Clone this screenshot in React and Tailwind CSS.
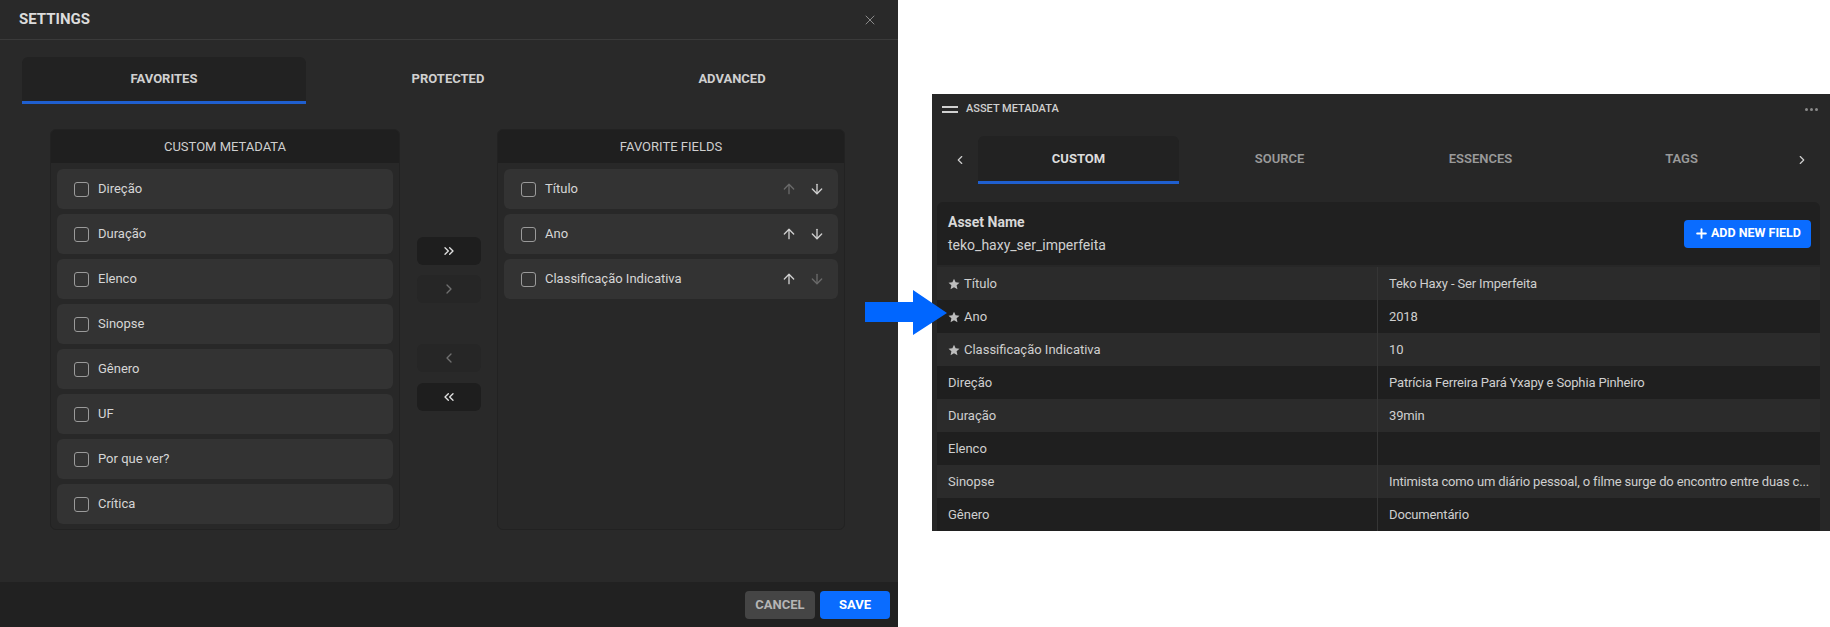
import React from "react";
import { X, ArrowUp, ArrowDown, ChevronsRight, ChevronRight, ChevronLeft, ChevronsLeft, Plus } from "lucide-react";

const font = { fontFamily: "Roboto, 'Noto Sans', sans-serif" };

function Checkbox() {
  return <div className="w-[15px] h-[15px] rounded-[3px] border-[1.5px] border-[#9a9a9a] shrink-0" />;
}

function Item({ label, up, down, arrows }) {
  return (
    <div className="h-[40px] rounded-md bg-[#333333] flex items-center pl-[17px] pr-[13px]">
      <Checkbox />
      <span className="ml-[9px] text-[13px] text-[#d6d6d6] flex-1">{label}</span>
      {arrows && (
        <div className="flex items-center gap-[12px]">
          <ArrowUp size={16} strokeWidth={2} className={up ? "text-[#d0d0d0]" : "text-[#6a6a6a]"} />
          <ArrowDown size={16} strokeWidth={2} className={down ? "text-[#d0d0d0]" : "text-[#6a6a6a]"} />
        </div>
      )}
    </div>
  );
}

function Panel({ title, children, w }) {
  return (
    <div className={`${w} h-[401px] rounded-md border border-[#222222] bg-[#282828] flex flex-col overflow-hidden`}>
      <div className="h-[33px] bg-[#1f1f1f] flex items-center justify-center text-[13px] text-[#cfcfcf]">{title}</div>
      <div className="flex flex-col gap-[5px] px-[6px] pt-[6px]">{children}</div>
    </div>
  );
}

function MidBtn({ children, active, className = "" }) {
  return (
    <div className={`w-[64px] h-[28px] rounded-md flex items-center justify-center ${active ? "bg-[#1e1e1e] text-[#e0e0e0]" : "bg-[#262626] text-[#707070]"} ${className}`}>
      {children}
    </div>
  );
}

function Star() {
  return (
    <svg width="12" height="12" viewBox="0 0 24 24" className="mr-[4px] shrink-0">
      <path fill="#bdbdbd" d="M12 1.5l3.2 7.1 7.8.8-5.8 5.3 1.7 7.7L12 18.4l-6.9 4 1.7-7.7L1 9.4l7.8-.8z" />
    </svg>
  );
}

function Settings() {
  const left = ["Direção", "Duração", "Elenco", "Sinopse", "Gênero", "UF", "Por que ver?", "Crítica"];
  return (
    <div className="w-[898px] h-[627px] bg-[#292929] flex flex-col shrink-0">
      <div className="h-[40px] border-b border-[#3a3a3a] flex items-center justify-between pl-[19px] pr-[20px]">
        <span className="text-[15px] font-bold text-[#dcdcdc]">SETTINGS</span>
        <X size={16} strokeWidth={1.5} className="text-[#8a8a8a]" />
      </div>
      <div className="flex-1 flex flex-col">
        <div className="pl-[22px] pr-[24px] pt-[17px]">
          <div className="grid grid-cols-3 h-[47px]">
            <div className="bg-[#222222] rounded-t-md border-b-[3px] border-[#1f5fcf] flex items-center justify-center text-[13px] font-bold text-[#d0d0d0]">FAVORITES</div>
            <div className="flex items-center justify-center text-[13px] font-bold text-[#d0d0d0] pb-[3px]">PROTECTED</div>
            <div className="flex items-center justify-center text-[13px] font-bold text-[#d0d0d0] pb-[3px]">ADVANCED</div>
          </div>
        </div>
        <div className="flex pl-[50px] mt-[25px]">
          <Panel title="CUSTOM METADATA" w="w-[350px]">
            {left.map((l) => <Item key={l} label={l} />)}
          </Panel>
          <div className="w-[97px] flex flex-col items-center pt-[108px]">
            <MidBtn active><ChevronsRight size={16} strokeWidth={2} /></MidBtn>
            <MidBtn className="mt-[10px]"><ChevronRight size={16} strokeWidth={2} /></MidBtn>
            <MidBtn className="mt-[41px]"><ChevronLeft size={16} strokeWidth={2} /></MidBtn>
            <MidBtn active className="mt-[11px]"><ChevronsLeft size={16} strokeWidth={2} /></MidBtn>
          </div>
          <Panel title="FAVORITE FIELDS" w="w-[348px]">
            <Item label="Título" arrows up={false} down />
            <Item label="Ano" arrows up down />
            <Item label="Classificação Indicativa" arrows up down={false} />
          </Panel>
        </div>
      </div>
      <div className="h-[45px] bg-[#212121] flex items-center justify-end pr-[8px] gap-[5px]">
        <div className="w-[70px] h-[28px] rounded-[4px] bg-[#454545] text-[#b5b5b5] text-[13px] font-bold flex items-center justify-center">CANCEL</div>
        <div className="w-[70px] h-[28px] rounded-[4px] bg-[#0a6cff] text-white text-[13px] font-bold flex items-center justify-center">SAVE</div>
      </div>
    </div>
  );
}

function AssetMetadata() {
  const rows = [
    ["Título", "Teko Haxy - Ser Imperfeita", true],
    ["Ano", "2018", true],
    ["Classificação Indicativa", "10", true],
    ["Direção", "Patrícia Ferreira Pará Yxapy e Sophia Pinheiro"],
    ["Duração", "39min"],
    ["Elenco", ""],
    ["Sinopse", "Intimista como um diário pessoal, o filme surge do encontro entre duas c..."],
    ["Gênero", "Documentário"],
  ];
  return (
    <div className="w-[898px] h-[437px] mt-[94px] bg-[#272727] flex flex-col overflow-hidden">
      <div className="h-[31px] flex items-center pl-[10px] pr-[12px]">
        <svg width="16" height="8" viewBox="0 0 16 8"><rect x="0" y="0" width="16" height="2" fill="#d0d0d0" /><rect x="0" y="5" width="16" height="2" fill="#d0d0d0" /></svg>
        <span className="ml-[8px] text-[11px] font-medium text-[#d0d0d0] flex-1">ASSET METADATA</span>
        <div className="flex gap-[2px]">
          <div className="w-[3px] h-[3px] rounded-full bg-[#8a8a8a]" />
          <div className="w-[3px] h-[3px] rounded-full bg-[#8a8a8a]" />
          <div className="w-[3px] h-[3px] rounded-full bg-[#8a8a8a]" />
        </div>
      </div>
      <div className="mt-[11px] h-[48px] flex items-center">
        <div className="w-[46px] flex items-center pl-[21px]">
          <ChevronLeft size={14} strokeWidth={2} className="text-[#cfcfcf]" />
        </div>
        <div className="w-[804px] h-full grid grid-cols-4">
          <div className="bg-[#222222] rounded-t-md border-b-[3px] border-[#1f5fcf] flex items-center justify-center text-[13px] font-bold text-[#dcdcdc]">CUSTOM</div>
          <div className="flex items-center justify-center text-[13px] font-semibold text-[#9a9a9a] pb-[3px]">SOURCE</div>
          <div className="flex items-center justify-center text-[13px] font-semibold text-[#9a9a9a] pb-[3px]">ESSENCES</div>
          <div className="flex items-center justify-center text-[13px] font-semibold text-[#9a9a9a] pb-[3px]">TAGS</div>
        </div>
        <div className="flex-1 flex items-center pl-[13px]">
          <ChevronRight size={14} strokeWidth={2} className="text-[#cfcfcf]" />
        </div>
      </div>
      <div className="ml-[5px] mr-[10px] mt-[18px] flex flex-col">
        <div className="h-[63px] bg-[#202020] rounded-t-md flex items-center justify-between pl-[11px] pr-[9px]">
          <div className="flex flex-col">
            <span className="text-[14px] font-bold text-[#d8d8d8] leading-[18px]">Asset Name</span>
            <span className="text-[14px] text-[#d0d0d0] leading-[18px] mt-[5px]">teko_haxy_ser_imperfeita</span>
          </div>
          <div className="h-[28px] px-[10px] rounded-[4px] bg-[#0a6cff] flex items-center text-white text-[12.5px] font-bold">
            <Plus size={15} strokeWidth={3} className="mr-[2px]" />ADD NEW FIELD
          </div>
        </div>
        <div className="mt-[2px] flex flex-col">
          {rows.map(([k, v, star], i) => (
            <div key={k} className={`h-[33px] flex ${i % 2 === 0 ? "bg-[#2b2b2b]" : "bg-[#1f1f1f]"}`}>
              <div className="w-[441px] border-r border-[#353535] flex items-center pl-[11px] text-[13px] text-[#cfcfcf]">
                {star && <Star />}{k}
              </div>
              <div className="flex-1 min-w-0 flex items-center pl-[11px] text-[13px] text-[#cfcfcf]">
                <span className="whitespace-nowrap tracking-[-0.15px]">{v}</span>
              </div>
            </div>
          ))}
        </div>
      </div>
    </div>
  );
}

export default function App() {
  return (
    <div className="w-[1830px] h-[627px] bg-white flex relative overflow-hidden" style={font}>
      <Settings />
      <div className="w-[34px] shrink-0" />
      <AssetMetadata />
      <svg className="absolute left-[865px] top-[290px]" width="83" height="46" viewBox="0 0 83 46">
        <polygon fill="#0066ff" points="0,12 48,12 48,0 82,23 48,45 48,32 0,32" />
      </svg>
    </div>
  );
}
